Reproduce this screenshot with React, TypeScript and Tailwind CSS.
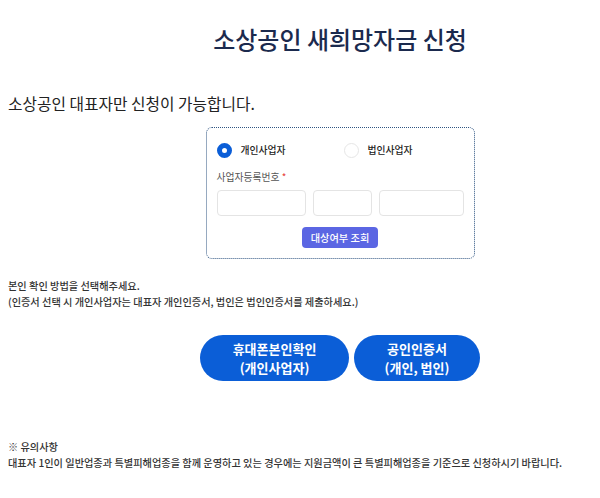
export default function App() {
  return (
    <div className="w-[600px] h-[498px] overflow-hidden bg-white font-['Noto_Sans_CJK_KR','Noto_Sans',sans-serif]">
      <div className="w-[680px] px-2">
        {/* 타이틀 */}
        <h1 className="mt-[24px] text-center text-[24px] leading-[29px] font-medium text-[#1b2a4e]">
          소상공인 새희망자금 신청
        </h1>

        <p className="mt-[41px] text-[15.75px] leading-[20px] text-[#222]">
          소상공인 대표자만 신청이 가능합니다.
        </p>

        {/* 사업자 조회 박스 */}
        <div className="mx-auto mt-[13px] w-[269px] h-[132px] rounded-md border border-dotted border-[#2f5582] px-[10px] pt-[15px]">
          <div className="flex items-center">
            <label className="flex w-[127px] items-center gap-[9px]">
              <span className="h-[15px] w-[15px] rounded-full border-[5px] border-[#0b5ed7] bg-white" />
              <span className="text-[9.8px] leading-[15px] font-medium text-[#222]">개인사업자</span>
            </label>
            <label className="flex items-center gap-[9px]">
              <span className="h-[15px] w-[15px] rounded-full border border-[#e6e6e6] bg-white" />
              <span className="text-[9.8px] leading-[15px] font-medium text-[#222]">법인사업자</span>
            </label>
          </div>

          <div className="mt-[11px] text-[9.8px] leading-[16px] text-[#555]">
            사업자등록번호 <span className="text-[#e53935]">*</span>
          </div>

          <div className="mt-[5px] flex gap-[7px]">
            <input className="h-[26px] w-[89px] rounded-sm border border-[#e4e4e4] bg-white outline-none" />
            <input className="h-[26px] w-[59px] rounded-sm border border-[#e4e4e4] bg-white outline-none" />
            <input className="h-[26px] w-[85px] rounded-sm border border-[#e4e4e4] bg-white outline-none" />
          </div>

          <div className="mt-[11px] flex justify-center">
            <button className="h-[21px] w-[76px] rounded-sm bg-[#5b66e3] text-[10.2px] font-medium text-white">
              대상여부 조회
            </button>
          </div>
        </div>

        {/* 본인 확인 안내 */}
        <div className="mt-[19px] text-[10.2px] leading-[16px] font-medium text-[#333]">
          <p>본인 확인 방법을 선택해주세요.</p>
          <p>(인증서 선택 시 개인사업자는 대표자 개인인증서, 법인은 법인인증서를 제출하세요.)</p>
        </div>

        <div className="mt-[25px] flex justify-center gap-[5px]">
          <button className="flex h-[46px] w-[149px] flex-col items-center justify-center rounded-full bg-[#0b5ed7] text-[13px] leading-[19px] font-semibold text-white">
            <span>휴대폰본인확인</span>
            <span>(개인사업자)</span>
          </button>
          <button className="flex h-[46px] w-[126px] flex-col items-center justify-center rounded-full bg-[#0b5ed7] text-[13px] leading-[19px] font-semibold text-white">
            <span>공인인증서</span>
            <span>(개인, 법인)</span>
          </button>
        </div>

        {/* 유의사항 */}
        <div className="mt-[58px] text-[10.2px] leading-[16px] font-medium text-[#333]">
          <p>※ 유의사항</p>
          <p>
            대표자 1인이 일반업종과 특별피해업종을 함께 운영하고 있는 경우에는 지원금액이 큰
            특별피해업종을 기준으로 신청하시기 바랍니다.
          </p>
        </div>
      </div>
    </div>
  );
}
